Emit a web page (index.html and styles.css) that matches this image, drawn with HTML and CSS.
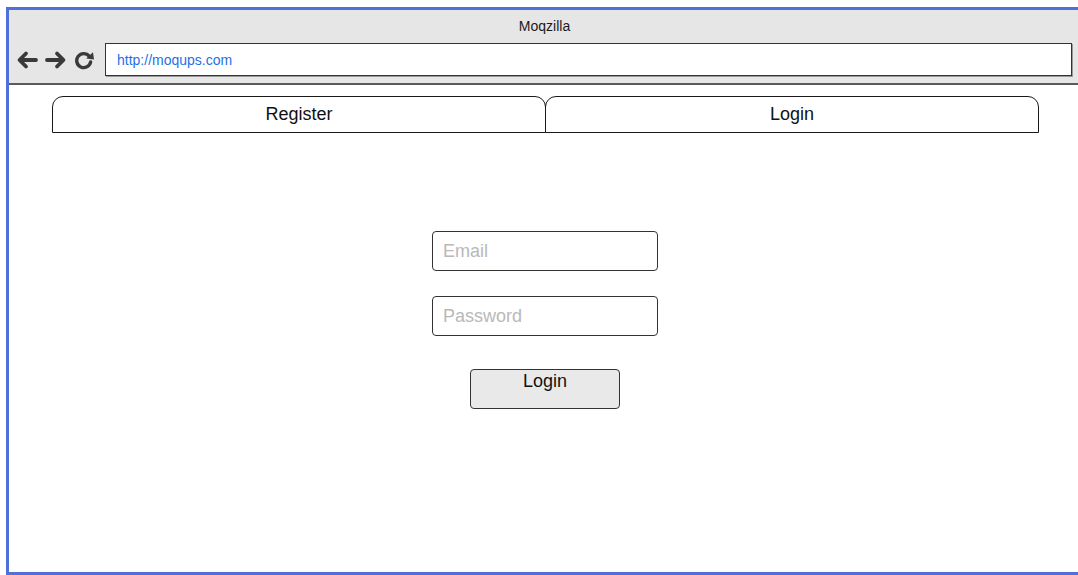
FILE: index.html
```html
<!DOCTYPE html>
<html>
<head>
<meta charset="utf-8">
<link rel="stylesheet" href="styles.css">
</head>
<body>
<div class="frame">
  <div class="titlebar">
    <div class="title">Moqzilla</div>
    <div class="nav">
      <svg class="icon" width="22" height="20" viewBox="0 0 22 20"><path d="M20 10H4M10 3.5L3.5 10L10 16.5" fill="none" stroke="#3a3a3a" stroke-width="3.8" stroke-linecap="round" stroke-linejoin="round"/></svg>
      <svg class="icon" width="22" height="20" viewBox="0 0 22 20"><path d="M2 10H18M12 3.5L18.5 10L12 16.5" fill="none" stroke="#3a3a3a" stroke-width="3.8" stroke-linecap="round" stroke-linejoin="round"/></svg>
      <svg class="icon reload" width="21" height="20" viewBox="0 0 21 20"><path d="M15.2 6.2A7 7 0 1 0 16.6 12" fill="none" stroke="#3a3a3a" stroke-width="3.4" stroke-linecap="round"/><path d="M12.2 8.6L20 9.6L19 2.2Z" fill="#3a3a3a"/></svg>
      <div class="url">http://moqups.com</div>
    </div>
  </div>
  <div class="content">
    <div class="tabs">
      <div class="tab">Register</div>
      <div class="tab second">Login</div>
    </div>
    <div class="form">
      <div class="field">Email</div>
      <div class="field">Password</div>
      <div class="button">Login</div>
    </div>
  </div>
</div>
</body>
</html>
```
FILE: styles.css
```css
html, body {
  margin: 0;
  padding: 0;
  background: #ffffff;
  overflow: hidden;
}
body {
  font-family: "Liberation Sans", Arial, sans-serif;
}
.frame {
  margin-left: 6px;
  margin-top: 7px;
  height: 562px;
  border-left: 3px solid #4f70d9;
  border-top: 3px solid #4f70d9;
  border-bottom: 3px solid #4f70d9;
  box-sizing: content-box;
  display: flex;
  flex-direction: column;
}
.titlebar {
  background: #e6e6e6;
  height: 73px;
  border-bottom: 2px solid #5a5a5a;
  display: flex;
  flex-direction: column;
}
.title {
  padding-top: 7px;
  height: 18px;
  line-height: 18px;
  font-size: 14px;
  color: #1a1a1a;
  text-align: center;
  padding-left: 2px;
}
.nav {
  margin-top: 8px;
  display: flex;
  align-items: center;
  padding-left: 7px;
}
.icon {
  display: block;
  margin-right: 7px;
}
.icon.reload {
  margin-right: 10px;
}
.url {
  width: 954px;
  height: 31px;
  border: 1px solid #333;
  box-shadow: 1px 1px 0 #999;
  background: #fff;
  color: #1f6fe5;
  font-size: 14px;
  line-height: 33px;
  padding-left: 11px;
  box-sizing: content-box;
}
.content {
  flex: 1;
  display: flex;
  flex-direction: column;
  padding-left: 43px;
}
.tabs {
  margin-top: 11px;
  display: flex;
}
.tab {
  width: 492px;
  height: 35px;
  border: 1px solid #1a1a1a;
  border-radius: 11px 11px 0 0;
  font-size: 18px;
  line-height: 35px;
  text-align: center;
  color: #111;
}
.tab.second {
  margin-left: -1px;
}
.form {
  width: 986px;
  margin-top: 98px;
  display: flex;
  flex-direction: column;
  align-items: center;
}
.field {
  width: 214px;
  height: 38px;
  border: 1px solid #333;
  border-radius: 4px;
  padding-left: 10px;
  font-size: 18px;
  line-height: 38px;
  color: #b9b9b9;
  margin-bottom: 25px;
}
.field + .field {
  margin-bottom: 33px;
}
.button {
  width: 148px;
  height: 38px;
  border: 1px solid #333;
  border-radius: 4px;
  background: #e9e9e9;
  font-size: 18px;
  line-height: 22px;
  text-align: center;
  color: #111;
}
```
